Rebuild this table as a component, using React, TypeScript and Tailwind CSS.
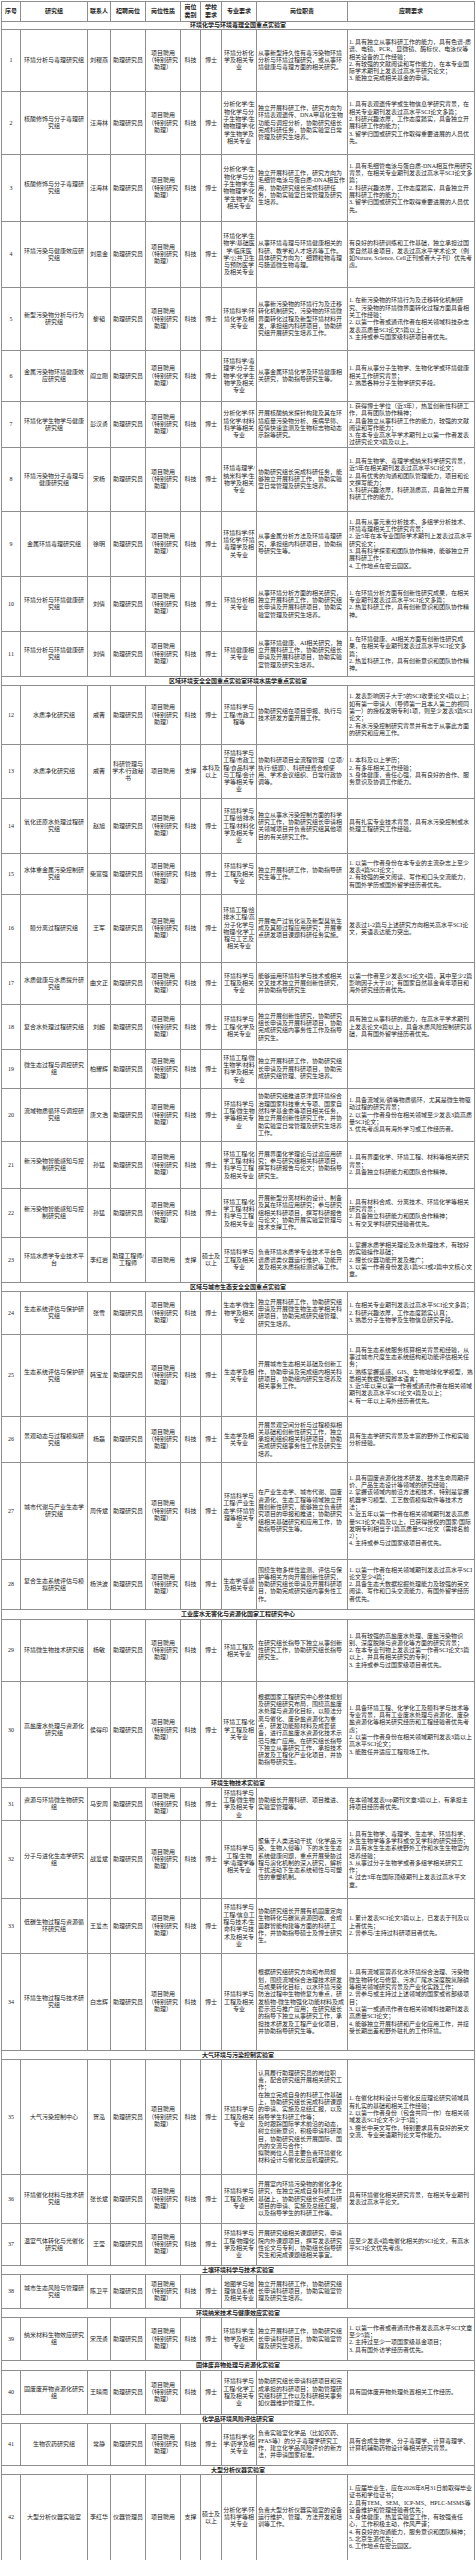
import React from "react";

type Row = {
  n: number;
  group: string;
  contact: string;
  post?: string;
  nature?: string;
  cat?: string;
  edu?: string;
  major: string;
  duty: string;
  req: string;
  h: string;
};

type Item = { section: string; h: string } | Row;

const items: Item[] = [
  { section: "环境化学与环境毒理全国重点实验室", h: "h-[8px]" },
  {
    n: 1, group: "环境分析与毒理研究组", contact: "刘稷燕", major: "环境分析化学及相关专业",
    duty: "从事新型持久性有毒污染物环境分析与环境过程研究，或从事环境健康与毒理方面的相关研究。",
    req: "1. 具有独立从事科研工作的能力，具有色谱-质谱、电镜、PCR、显微镜、酶标仪、电泳仪等相关设备的工作经验；\n2. 有较强的文献阅读和写作能力，在本专业国际学术期刊上发表过高水平研究论文；\n3. 能独立完成相关基金的申请。",
    h: "h-[62px]",
  },
  {
    n: 2, group: "核酸修饰与分子毒理研究组", contact: "汪海林", major: "分析化学/生物化学与分子生物学/生物物理学/化学生物学及相关专业",
    duty: "独立开展科研工作，研究方向为环境表观遗传、DNA甲基化生物功能与调控分析，协助研究组长完成科研任务，协助实验室日常管理及研究生培养。",
    req: "1. 具有表观遗传学或生物信息学研究背景，在相关专业期刊发表过高水平SCI论文多篇；\n2. 科研兴趣浓厚，工作态度踏实，具备独立开展科研工作的能力；\n3. 留学归国或研究工作取得重要进展的人员优先。",
    h: "h-[63px]",
  },
  {
    n: 3, group: "核酸修饰与分子毒理研究组", contact: "汪海林", major: "分析化学/生物化学与分子生物学/生物物理学/化学生物学及相关专业",
    duty: "独立开展科研工作，研究方向为毛细管电泳与蛋白质-DNA相互作用，协助研究组长完成科研任务，协助实验室日常管理及研究生培养。",
    req: "1. 具有毛细管电泳与蛋白质-DNA相互作用研究背景，在相关专业期刊发表过高水平SCI论文多篇；\n2. 科研兴趣浓厚，工作态度踏实，具备独立开展科研工作的能力；\n3. 留学归国或研究工作取得重要进展的人员优先。",
    h: "h-[67px]",
  },
  {
    n: 4, group: "环境污染与健康效应研究组", contact: "刘思金", major: "环境化学/生物学/基础医学/临床医学/公共卫生与预防医学及相关专业",
    duty: "从事环境毒理与环境健康相关的科研、教学和人才培养等工作。具体研究方向为：细颗粒物毒理与肠道微生物毒理。",
    req: "有良好的科研训练和工作基础，独立承担过国家自然基金项目，发表过高水平学术论文（例如Nature, Science, Cell正刊或者大子刊）优先考虑。",
    h: "h-[66px]",
  },
  {
    n: 5, group: "新型污染物分析与行为研究组", contact: "黎韬", major: "环境科学/环境化学及相关专业",
    duty: "从事新污染物的环境行为及迁移转化机制研究，污染物的环境微界面转化过程及新型环境材料开发，承担组内科研项目，协助研究组开展研究生培养工作。",
    req: "1. 在新污染物的环境行为及迁移转化机制研究、污染物的环境微界面转化过程方面具备相关工作经验；\n2. 以第一作者或通讯作者在相关领域科技杂志发表高质量SCI论文5篇以上；\n3. 主持或参与国家级科研项目者优先。",
    h: "h-[63px]",
  },
  {
    n: 6, group: "金属污染物环境健康效应研究组", contact: "阎立刚", major: "环境科学/毒理学/分子生物学/化学生物学及相关专业",
    duty: "从事金属环境化学及环境健康相关研究，协助指导研究生等。",
    req: "1. 具有从事分子生物学、生物化学或环境健康相关工作研究背景；\n2. 熟悉各种分子生物学研究手段。",
    h: "h-[51px]",
  },
  {
    n: 7, group: "环境化学生物学与健康研究组", contact: "彭汉勇", major: "分析化学/环境化学/材料科学等相关专业",
    duty: "开展核酸纳米探针构建及其在环境痕量污染物分析、疾病早筛、疫情快速监测及生物标志物动态示踪等研究。",
    req: "1. 获得博士学位（近3年），热爱创新性科研工作，具有团队协作精神；\n2. 具备独立从事科研工作的能力，较强的文献阅读和写作能力；\n3. 在本专业高水平学术期刊上以第一作者发表过研究论文3篇及以上。",
    h: "h-[46px]",
  },
  {
    n: 8, group: "环境污染物分子毒理与健康研究组", contact: "宋杨", major: "环境毒理学/纳米科学/生物学及相关专业",
    duty: "协助研究组长完成科研任务，能够独立开展科研工作，协助实验室日常管理及研究生培养。",
    req: "1. 具有生物学、毒理学或纳米科学研究背景，近5年在相关期刊发表过高水平SCI论文；\n2. 具有优秀的沟通和团队管理能力，项目和论文撰写能力；\n3. 科研兴趣浓厚，科研潜质高，具备独立开展科研工作的能力。",
    h: "h-[64px]",
  },
  {
    n: 9, group: "金属环境毒理研究组", contact: "徐明", major: "环境科学/环境化学/环境毒理学及相关专业",
    duty: "从事金属分析方法及环境毒理研究，承担组内科研项目，协助指导研究生等。",
    req: "1. 具有从事元素分析技术、多组学分析技术、环境毒理相关工作研究背景；\n2. 近5年在本专业国际学术期刊上发表过高水平研究论文；\n3. 具有科学探索和团队协作精神，能够独立开展科研工作；\n4. 工作地点在密云园区。",
    h: "h-[65px]",
  },
  {
    n: 10, group: "环境分析与环境健康研究组", contact: "刘倩", major: "环境分析相关专业",
    duty: "从事环境分析方面的相关研究，独立开展科研工作，协助研究组长申请及开展科研项目，协助实验室管理及研究生培养。",
    req: "1. 在环境分析方面有创新性研究成果，在相关专业期刊发表过高水平SCI论文多篇；\n2. 热爱科研工作，具有创新意识和团队协作精神。",
    h: "h-[55px]",
  },
  {
    n: 11, group: "环境分析与环境健康研究组", contact: "刘倩", major: "环境健康相关专业",
    duty: "从事环境健康、AI相关研究，独立开展科研工作，协助研究组长申请及开展科研项目，协助实验室管理及研究生培养。",
    req: "1. 在环境健康、AI相关方面有创新性研究成果，在相关专业期刊发表过高水平SCI论文多篇；\n2. 热爱科研工作，具有创新意识和团队协作精神。",
    h: "h-[45px]",
  },
  { section: "区域环境安全全国重点实验室环境水质学重点实验室", h: "h-[9px]" },
  {
    n: 12, group: "水质净化研究组", contact: "戚菁", major: "环境科学与工程/市政工程等",
    duty: "协助研究组在项目申报、执行与技术研发方面开展工作。",
    req: "1. 发表影响因子大于5的SCI收录论文4篇以上；如有第一申请人（导师第一且本人第二的视同第一）的授权发明专利1项，则至少发表3篇SCI论文；\n2. 有水污染控制研究背景并有志于从事此方面的研究和应用工作。",
    h: "h-[59px]",
  },
  {
    n: 13, group: "水质净化研究组", contact: "戚菁", post: "科研管理与学术/行政秘书", nature: "项目聘用", cat: "支撑", edu: "本科及以上",
    major: "环境科学与工程/市政工程/食品科学与工程/会计学等相关专业",
    duty: "协助科研项目全流程管理（立项/执行/结题）、科研经费合规使用、学术会议组织、日常行政协调等。",
    req: "1. 本科及以上学历；\n2. 有多年相关工作经验；\n3. 身体健康，责任心强，具有良好的合作、服务意识及协调工作能力。",
    h: "h-[54px]",
  },
  {
    n: 14, group: "氧化还原水处理过程研究组", contact: "赵旭", major: "环境科学与工程/给排水工程/材料化学及相关专业",
    duty: "独立从事水污染控制方面的科学研究工作，协助研究组长申请相关领域项目并负责研究组其他项目的有关研究工作。",
    req: "具有扎实专业技术背景，具有水污染控制或水处理工程研究工作经验。",
    h: "h-[55px]",
  },
  {
    n: 15, group: "水体重金属污染控制研究组", contact: "柴富强", major: "环境科学与工程及相关专业",
    duty: "独立开展科研工作，协助指导研究生等工作。",
    req: "1. 以第一作者身份在本专业的主流杂志上至少发表4篇SCI论文；\n2. 有较强的英文阅读、写作和口头交流能力，有国外学历或国外留学经历者优先。",
    h: "h-[41px]",
  },
  {
    n: 16, group: "膜分离过程研究组", contact: "王军", major: "环境工程/给排水工程/高分子化学与物理/化学工程与工艺及相关专业",
    duty: "开展电产过氧化氢及新型臭氧生成及其膜过程应用研究；开展重点研发项目课题科研任务实施。",
    req: "发表过1-2篇与上述研究方向相关高水平SCI论文，英语表达能力突出。",
    h: "h-[68px]",
  },
  {
    n: 17, group: "水质健康与水质提升研究组", contact: "曲文正", major: "环境科学与工程及相关专业",
    duty: "能够运用环境科学与技术或相关交叉技术独立开展创新性研究，并协助指导研究生",
    req: "以第一作者至少发表SCI论文4篇，其中至少2篇影响因子大于10；有国家自然基金青年项目和海外研究经历者优先。",
    h: "h-[42px]",
  },
  {
    n: 18, group: "复合水处理过程研究组", contact: "刘超", major: "环境科学与工程/化学及相关专业",
    duty: "独立开展创新性研究，协助研究组长申请及开展科研项目，协助完成研究组内事务性工作及指导研究生。",
    req: "具有独立从事科研的能力，在高水平学术期刊上发表论文4篇以上，具备水质风险控制研究基础，具有国外留学经历者优先。",
    h: "h-[45px]",
  },
  {
    n: 19, group: "微生态过程与调控研究组", contact: "柏耀辉", major: "环境工程/微生物学/材料科学及相关专业",
    duty: "独立开展科研工作，协助研究组长申请及开展科研项目，协助完成研究组管理、研究生培养。",
    req: "",
    h: "h-[39px]",
  },
  {
    n: 20, group: "流域物质循环与调控研究组", contact: "唐文浩", major: "环境科学与工程/微生物学等相关专业",
    duty: "协助研究组推进京津冀环境综合治理国家科技重大专项、国家自然科学基金委等项目相关任务，独立开展创新性研究工作，并协助实验室日常管理及研究生培养工作。",
    req: "1. 具备流域氮/磷等物质循环，尤其是微生物驱动过程的研究背景；\n2. 以第一作者身份在相关领域至少发表3篇高质量SCI论文；\n3. 优先考虑具有海外学习或工作经历者。",
    h: "h-[53px]",
  },
  {
    n: 21, group: "新污染物智能感知与控制研究组", contact: "孙猛", major: "环境工程/化学工程/材料科学与工程及相关专业",
    duty: "开展界面化学理论与过滤应用研究；参与研究组相关科研项目，撰写科研报告与论文；协助指导研究生。",
    req: "1. 具有界面化学、环境工程、材料等相关研究背景；\n2. 具备独立科研能力和团队合作精神。",
    h: "h-[47px]",
  },
  {
    n: 22, group: "新污染物智能感知与控制研究组", contact: "孙猛", major: "环境工程/化学工程/材料科学与工程及相关专业",
    duty: "开展新型分离材料的设计、制备及其在环境应用研究；参与研究组相关科研项目，撰写科研报告与论文；协助开展实验室管理与技术支撑工作。",
    req: "1. 具有材料合成、分离技术、环境化学等相关研究背景；\n2. 具备独立科研能力和团队合作精神；\n3. 有交叉学科研究经验者优先。",
    h: "h-[49px]",
  },
  {
    n: 23, group: "环境水质学专业技术平台", contact: "李红岩", post: "助理工程师/工程师", nature: "项目聘用", cat: "支撑", edu: "硕士及以上",
    major: "环境科学与工程及相关专业",
    duty: "负责环境水质学专业技术平台色谱质谱类仪器运行维护、功能开发及相关水质指标测试等工作。",
    req: "1. 掌握水质学相关理论及水处理技术，有较好的实验操作基础；\n2. 擅长仪器功能开发及推广；\n3. 以第一作者身份发表1篇SCI或2篇中文核心文章。",
    h: "h-[45px]",
  },
  { section: "区域与城市生态安全全国重点实验室", h: "h-[9px]" },
  {
    n: 24, group: "生态系统评估与保护研究组", contact: "张雪", major: "生态学/微生物学及相关专业",
    duty: "独立开展科研工作，协助研究组申请及开展微生物生态学相关科研项目，协助完成研究组管理、研究生培养。",
    req: "1. 在相关专业期刊发表过高水平SCI论文多篇；\n2. 科研兴趣浓厚，工作态度踏实认真；\n3. 熟悉分子生物学及生物信息研究手段。",
    h: "h-[43px]",
  },
  {
    n: 25, group: "生态系统评估与保护研究组", contact: "韩宝龙", major: "生态学及相关专业",
    duty: "开展城市生态相关基础及创新工作，协助申请及完成组内相关科研项目，协助组内研究生培养及相关事务工作。",
    req: "1. 具有生态系统服务核算相关背景和经验，从事过城市尺度生态系统结构和功能评估相关任务；\n2. 熟练掌握遥感、GIS、生物地球化学模型，熟悉相关数据处理脚本语言；\n3. 近5年以来以第一作者或通讯作者在相关领域期刊发表高水平SCI论文4篇及以上；\n4. 有一年以上海外经历者优先。",
    h: "h-[82px]",
  },
  {
    n: 26, group: "景观动态与过程模拟研究组", contact: "杨磊", major: "生态学及相关专业",
    duty: "开展景观空间分析与过程模拟相关基础和创新性研究工作，独立承担和组织相关科研项目，协助完成研究组事务性工作及研究生培养。",
    req: "具有生态学研究背景及丰富的野外工作和实验分析经验。",
    h: "h-[46px]",
  },
  {
    n: 27, group: "城市代谢与产业生态学研究组", contact: "周传斌", major: "环境科学与工程/产业生态学/环境管理等相关专业",
    duty: "在产业生态学、城市代谢、固废资源化、生态工程等领域独立开展创新性研究，能够独立负责研究项目的申报和推进；协助研究组相关基础研究和应用工作，协助指导研究生等。",
    req: "1. 具有固废资源化技术研发、技术生命周期评价、产品生态设计等领域的研究经验；\n2. 掌握该领域内前沿方法和技术，特别是掌握机器学习模型、工艺数值模拟软件等技术方法；\n3. 近五年以第一作者在相关领域期刊发表高质量SCI论文4篇及以上，已获得授权的国家/国际发明专利相当于1篇高质量SCI论文（需排名前2）；\n4. 主持或参与过国家级项目者优先。",
    h: "h-[97px]",
  },
  {
    n: 28, group: "复合生态系统评估与模拟研究组", contact: "杨洪波", major: "生态学/遥感及相关专业",
    duty: "围绕生物多样性监测、评估与保护等相关方向开展创新性研究，协助研究组长申请及开展科研项目，协助完成研究组内事务性工作。",
    req: "1. 以第一作者在相关领域期刊发表过高水平SCI论文至少4篇；\n2. 具备生态大数据挖掘处理能力及较强的英文阅读、写作和口头交流能力，有国外留学经历者优先。",
    h: "h-[50px]",
  },
  { section: "工业废水无害化与资源化国家工程研究中心", h: "h-[10px]" },
  {
    n: 29, group: "环境微生物技术研究组", contact: "杨敏", major: "环境工程及相关专业",
    duty: "在研究组长指导下独立从事创新性研究工作，协助研究组长指导研究生。",
    req: "1. 具有较强的高盐废水处理、废盐污染物识别、深度脱除与资源化等方面的研究背景；\n2. 在本专业刊物上发表过第一作者SCI论文5篇以上，并具有相关研究的专利；\n3. 主持或参与过国家级项目者优先。",
    h: "h-[62px]",
  },
  {
    n: 30, group: "高盐废水处理与资源化研究组", contact: "侯得印", major: "环境工程/化学工程及相关专业",
    duty: "根据国家工程研究中心整体规划及研究组研究布局，围绕高盐废水处理与资源化目标，以膜法分离与催化、废杂盐资源化为重点，研发功能膜材料及成套装备，进行高盐废水资源化技术示范与推广应用。在研究组长指导下独立从事研究工作，承担技术研发及工程化产业化项目，并协助指导研究生。",
    req: "1. 具备环境工程、化学化工及膜科学与技术等专业背景，具有工业废水处理与资源化、废杂盐资源化等相关研究经历和工程经验者优先考虑；\n2. 以第一作者身份在相关领域期刊发表3篇以上高水平SCI论文；\n3. 能胜任并适应工程现场工作。",
    h: "h-[97px]",
  },
  { section: "环境生物技术实验室", h: "h-[9px]" },
  {
    n: 31, group: "资源与环境微生物研究组", contact: "马安周", major: "环境科学与工程/微生物学及相关专业",
    duty: "协助组长开展科研、项目推进、实验室管理等。",
    req: "在本领域发表top期刊文章3篇以上，有承担主持项目经历者优先。",
    h: "h-[33px]",
  },
  {
    n: 32, group: "分子与进化生态学研究组", contact: "战爱斌", major: "环境科学与工程/生物学/毒理学等相关专业",
    duty: "聚焦于人类活动干扰（化学品污染、生物入侵等）下的水生生态系统健康问题，重点开展受胁过程与演化机制的深入研究，解析干扰活动下生态系统韧性与可塑性的重塑机制。",
    req: "1. 具有生物学、毒理学、生态学、环境科学、水生生物学等多学科或交叉学科的研究经历；\n2. 具有水生生态系统野外工作和水生生物室内培养经验；\n3. 从事过分子生物学或者多组学相关研究工作；\n4. 过去3年在国际顶级期刊上发表过高水平文章。",
    h: "h-[78px]",
  },
  {
    n: 33, group: "低碳生物过程与资源循环研究组", contact: "王爱杰", major: "环境科学与工程/信息工程与技术/生命科学与技术及相关专业",
    duty: "协助研究组长开展有机固废定向生物转化与碳氮资源回收、合成菌群智能构建等方面的科研工作，并协助指导硕士及博士研究生。",
    req: "1. 累计发表SCI论文5篇以上，已发表于刊及以上者优先；\n2. 曾参与/主持过科研项目者优先。",
    h: "h-[55px]",
  },
  {
    n: 34, group: "环境生物过程与技术研究组", contact: "白志辉", major: "环境科学与工程及相关专业",
    duty: "根据研究组研究方向和布局规划，围绕流域综合治理技术研发与成果转化目标，以水环境污染防治过程中生物修复为重点，研发植物-微生物强化功能材料及成套示范与推广应用；在研究组长的指导下独立从事研究工作，承担技术研发及工程产业化项目，并协助指导研究生等。",
    req: "1. 具有流域富营养化水环境综合治理、污染物微生物转化与修复、污水厂尾水深度脱氮除磷等相关领域研究背景及产业化实践工作；\n2. 曾参与或主持过上述领域的国家或省部级项目；\n3. 以第一或通讯作者在相关领域科技期刊发表高质量SCI论文；\n4. 能够独立开展科研和产业化应用工作，并接受长期出差和野外驻扎的工作环境。",
    h: "h-[97px]",
  },
  { section: "大气环境与污染控制实验室", h: "h-[9px]" },
  {
    n: 35, group: "大气污染控制中心", contact: "贺泓", major: "环境科学与工程及相关专业",
    duty: "认真履行助理研究员的岗位职责，配合研究组开展相关研究工作；\n在独立完成自身的科研工作基础上，协助研究组长完成科研课题的申请、实施及总结汇报，以及指导学生科研工作等；\n及时跟踪国际学术前沿的动态，树立创新意识，积极申请科研项目，协助研究组长开展国际、国内的交流与合作；\n拟聘岗位人员主要负责环境催化材料设计与催化反应机理研究。",
    req: "1. 在催化材料设计与催化反应理论研究领域具有扎实的基础和相关工作经验；\n2. 以第一作者身份（包含共同一作）在相关领域发表SCI论文不少于5篇；\n3. 擅长中英文写作，特别要求具有良好的英文交流、专业英语期刊论文写作能力。",
    h: "h-[115px]",
  },
  {
    n: 36, group: "环境催化材料与技术研究组", contact: "张长斌", major: "环境科学与工程及相关专业",
    duty: "开展室内环境污染物的催化净化研究，在独立完成自身科研工作基础上，协助研究组长完成科研项目的申请、实施及总结汇报，以及指导学生的科研工作等。",
    req: "具有环境催化相关研究背景，在相关专业期刊发表过高水平论文。",
    h: "h-[49px]",
  },
  {
    n: 37, group: "温室气体转化与光催化研究组", contact: "王莹", major: "环境科学与工程/物理化学及相关专业",
    duty: "开展研究组相关课题研究，申请院内外课题项目，撰写发表研究性论文与专利，协助组长指导研究生和完成课题组相关事宜。",
    req: "应至少发表4篇电催化相关的SCI论文，有高水平SCI论文优先考虑。",
    h: "h-[42px]",
  },
  { section: "土壤环境科学与技术实验室", h: "h-[9px]" },
  {
    n: 38, group: "城市生态风险与管理研究组", contact: "陈卫平", major: "地图学与地理信息系统及相关专业",
    duty: "独立开展科研工作，协助研究组长申请科研项目，协助实验室管理及研究生培养。",
    req: "",
    h: "h-[34px]",
  },
  { section: "环境纳米技术与健康效应实验室", h: "h-[9px]" },
  {
    n: 39, group: "纳米材料生物效应研究组", contact: "宋茂勇", major: "环境科学/生物学及相关专业",
    duty: "独立开展科研工作，协助研究组长申请科研项目，协助实验室管理及研究生培养。",
    req: "1. 以第一作者或者通讯作者发表高水平SCI文章至少5篇；\n2. 主持过至少一项国家级基金项目；\n3. 具有国外访学经历者优先。",
    h: "h-[43px]",
  },
  { section: "固体废弃物处理与资源化实验室", h: "h-[10px]" },
  {
    n: 40, group: "固废废弃物资源化研究组", contact: "王晴南", major: "环境科学与工程/化学工程及相关专业",
    duty: "协助研究组长申请科研项目和完成承担的科研项目；协助管理研究组科研工作以及科研相关事务如仪器维护管理工作。",
    req: "具有固体废弃物处理处置相关工作经历。",
    h: "h-[44px]",
  },
  { section: "化学品环境风险评估研究室", h: "h-[9px]" },
  {
    n: 41, group: "生物农药研究组", contact: "常静", major: "环境科学/化学/药学及相关专业",
    duty: "负责实验室化学品（比如农药、PFAS等）的分子毒理学研究工作，建立化学品风险评价的新方法，并申请国家标准。",
    req: "具有合成生物学、分子毒理学、计算毒理学、计算机辅助药物设计等相关研究背景。",
    h: "h-[42px]",
  },
  { section: "大型分析仪器实验室", h: "h-[9px]" },
  {
    n: 42, group: "大型分析仪器实验室", contact: "李红华", post: "仪器管理员", nature: "项目聘用", cat: "支撑", edu: "硕士及以上",
    major: "分析化学/环境科学等相关专业",
    duty: "负责大型分析仪器实验室的设备运行维护、管理、方法开发和培训等工作。",
    req: "1. 应届毕业生，应在2026年8月31日前取得毕业证书和学位证书；\n2. 具有TEM、SEM、ICP-MS、HPLC-MSMS等设备维护和管理经验者优先；\n3. 身体健康，热爱实验室工作，有较强责任心，工作积极主动，作风严谨；\n4. 有良好的沟通能力，服务意识和团队精神；\n5. 北京生源优先；\n6. 工作地点在密云园区。",
    h: "h-[86px]",
  },
];

const cell = "border border-[#8e8e8e] px-[1px] py-0 align-middle";
const c = cell + " text-center";
const l = cell + " text-left";

export default function App() {
  return (
    <div className="w-[476px] bg-white pt-[1px] font-['Liberation_Serif','Noto_Sans_CJK_SC',serif] text-[6px] leading-[7.3px] text-[#222]">
      <table className="ml-[1px] w-[473px] table-fixed border-collapse border-[1.5px] border-[#4a4a4a]">
        <colgroup>
          <col className="w-[19px]" />
          <col className="w-[67px]" />
          <col className="w-[23px]" />
          <col className="w-[35px]" />
          <col className="w-[35px]" />
          <col className="w-[20px]" />
          <col className="w-[21px]" />
          <col className="w-[35px]" />
          <col className="w-[91px]" />
          <col className="w-[127px]" />
        </colgroup>
        <thead>
          <tr className="h-[20px] font-semibold text-[#1a1a1a]">
            <th className={c}>序号</th>
            <th className={c}>研究组</th>
            <th className={c}>联系人</th>
            <th className={c}>招聘岗位</th>
            <th className={c}>岗位性质</th>
            <th className={c}>岗位<br />类别</th>
            <th className={c}>学校<br />要求</th>
            <th className={c}>专业要求</th>
            <th className={c}>岗位职责</th>
            <th className={c}>应聘要求</th>
          </tr>
        </thead>
        <tbody>
          {items.map((it, i) =>
            "section" in it ? (
              <tr key={i} className={it.h}>
                <td colSpan={10} className={c + " font-bold text-[#1a1a1a]"}>
                  {it.section}
                </td>
              </tr>
            ) : (
              <tr key={i} className={it.h}>
                <td className={c}>{it.n}</td>
                <td className={c}>{it.group}</td>
                <td className={c}>{it.contact}</td>
                <td className={c}>{it.post ?? "助理研究员"}</td>
                <td className={c}>{it.nature ?? "项目聘用（特别研究助理）"}</td>
                <td className={c}>{it.cat ?? "科技"}</td>
                <td className={c}>{it.edu ?? "博士"}</td>
                <td className={c}>{it.major}</td>
                <td className={l + " whitespace-pre-line"}>{it.duty}</td>
                <td className={l + " whitespace-pre-line"}>{it.req}</td>
              </tr>
            )
          )}
        </tbody>
      </table>
    </div>
  );
}
